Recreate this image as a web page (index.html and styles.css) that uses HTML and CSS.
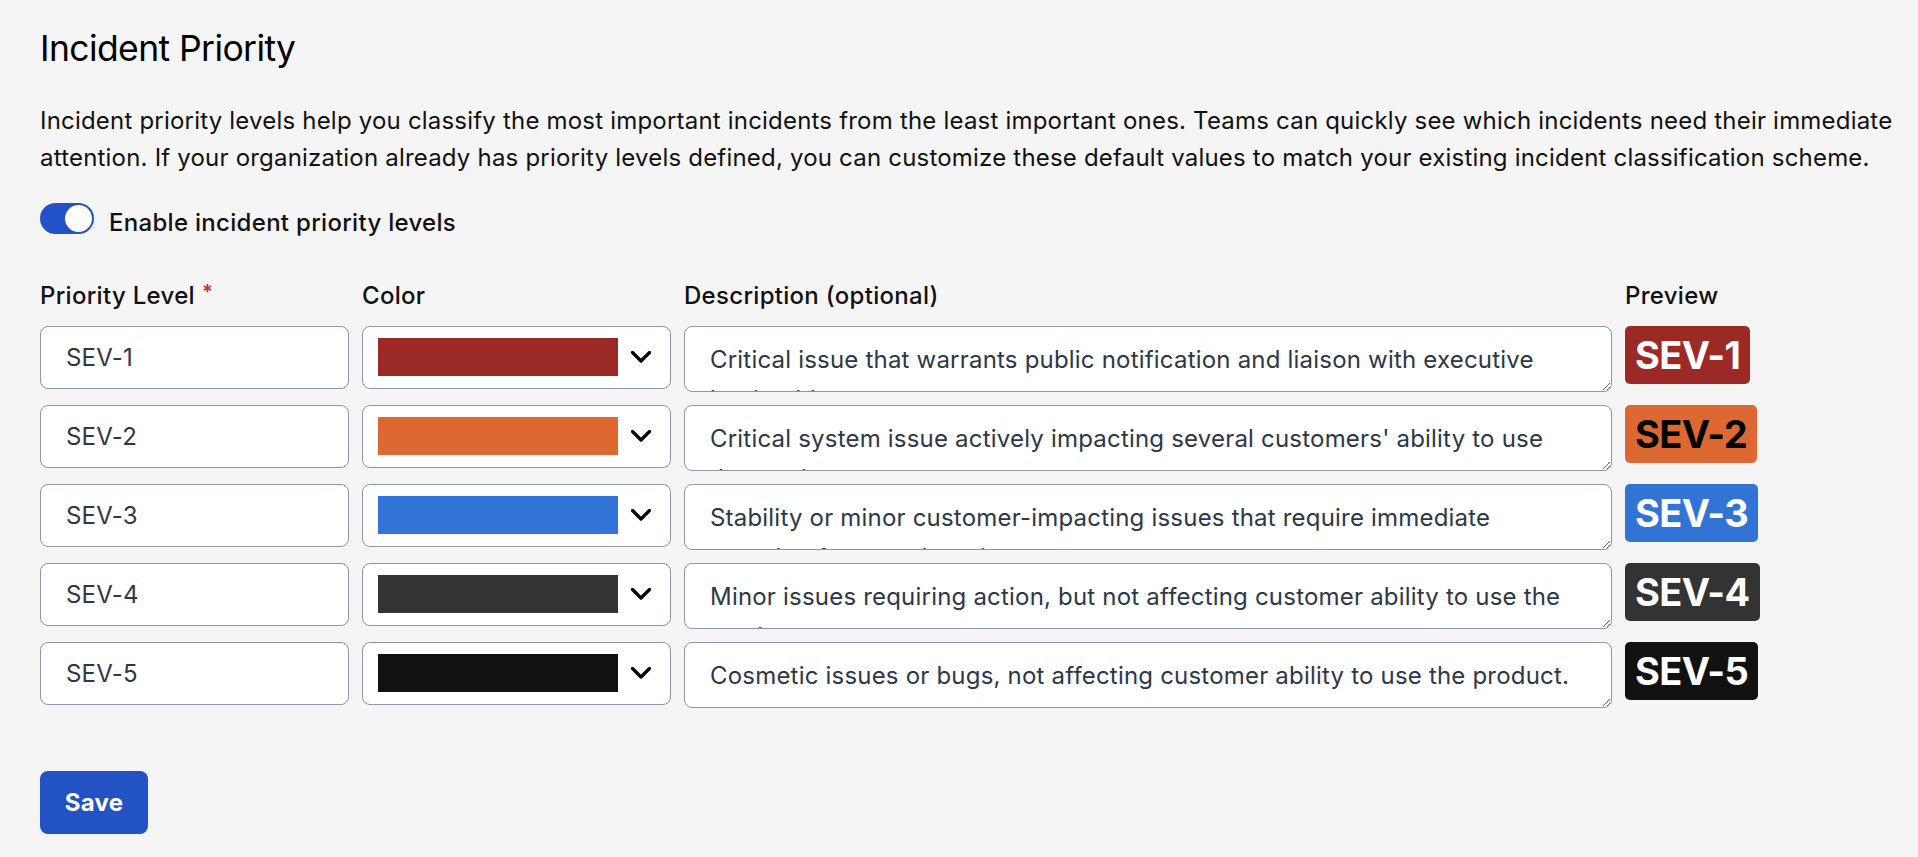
FILE: index.html
```html
<!DOCTYPE html>
<html lang="en">
<head>
<meta charset="utf-8">
<title>Incident Priority</title>
<link rel="stylesheet" href="styles.css">
</head>
<body>
<main class="page">
  <h1 class="title">Incident Priority</h1>
  <p class="intro">Incident priority levels help you classify the most important incidents from the least important ones. Teams can quickly see which incidents need their immediate attention. If your organization already has priority levels defined, you can customize these default values to match your existing incident classification scheme.</p>

  <label class="toggle-row">
    <span class="toggle"><span class="knob"></span></span>
    <span class="toggle-label">Enable incident priority levels</span>
  </label>

  <div class="levels">
    <div class="grid head">
      <div class="col-label">Priority Level<span class="req">*</span></div>
      <div class="col-label">Color</div>
      <div class="col-label">Description (optional)</div>
      <div class="col-label">Preview</div>
    </div>

    <div class="grid row">
      <input class="field" type="text" value="SEV-1">
      <div class="select"><span class="swatch c1"></span><svg class="chev" viewBox="0 0 20 12" width="20" height="12"><path d="M1.5 1.5 L10 10 L18.5 1.5" fill="none" stroke="#000" stroke-width="3.2" stroke-linecap="round" stroke-linejoin="round"/></svg></div>
      <textarea class="desc">Critical issue that warrants public notification and liaison with executive leadership.</textarea>
      <div class="badge c1 light">SEV-1</div>
    </div>

    <div class="grid row">
      <input class="field" type="text" value="SEV-2">
      <div class="select"><span class="swatch c2"></span><svg class="chev" viewBox="0 0 20 12" width="20" height="12"><path d="M1.5 1.5 L10 10 L18.5 1.5" fill="none" stroke="#000" stroke-width="3.2" stroke-linecap="round" stroke-linejoin="round"/></svg></div>
      <textarea class="desc">Critical system issue actively impacting several customers' ability to use the product.</textarea>
      <div class="badge c2 dark">SEV-2</div>
    </div>

    <div class="grid row">
      <input class="field" type="text" value="SEV-3">
      <div class="select"><span class="swatch c3"></span><svg class="chev" viewBox="0 0 20 12" width="20" height="12"><path d="M1.5 1.5 L10 10 L18.5 1.5" fill="none" stroke="#000" stroke-width="3.2" stroke-linecap="round" stroke-linejoin="round"/></svg></div>
      <textarea class="desc">Stability or minor customer-impacting issues that require immediate attention from engineering.</textarea>
      <div class="badge c3 light">SEV-3</div>
    </div>

    <div class="grid row">
      <input class="field" type="text" value="SEV-4">
      <div class="select"><span class="swatch c4"></span><svg class="chev" viewBox="0 0 20 12" width="20" height="12"><path d="M1.5 1.5 L10 10 L18.5 1.5" fill="none" stroke="#000" stroke-width="3.2" stroke-linecap="round" stroke-linejoin="round"/></svg></div>
      <textarea class="desc">Minor issues requiring action, but not affecting customer ability to use the product.</textarea>
      <div class="badge c4 light">SEV-4</div>
    </div>

    <div class="grid row">
      <input class="field" type="text" value="SEV-5">
      <div class="select"><span class="swatch c5"></span><svg class="chev" viewBox="0 0 20 12" width="20" height="12"><path d="M1.5 1.5 L10 10 L18.5 1.5" fill="none" stroke="#000" stroke-width="3.2" stroke-linecap="round" stroke-linejoin="round"/></svg></div>
      <textarea class="desc">Cosmetic issues or bugs, not affecting customer ability to use the product.</textarea>
      <div class="badge c5 light">SEV-5</div>
    </div>
  </div>

  <button class="save" type="button">Save</button>
</main>
</body>
</html>
```
FILE: styles.css
```css
html, body {
  margin: 0;
  padding: 0;
  background: #f5f5f5;
}

body {
  font-family: Inter, "Noto Sans", "Liberation Sans", sans-serif;
  color: #111;
  font-size: 24px;
  letter-spacing: 0.2px;
}

.page {
  padding: 27px 16px 0 40px;
}

.title {
  margin: 0;
  font-size: 35.5px;
  line-height: 44px;
  font-weight: 400;
  letter-spacing: -0.6px;
  color: #000;
}

.intro {
  margin: 32px 0 0;
  font-size: 24px;
  line-height: 36.7px;
  color: #111;
}

.toggle-row {
  display: flex;
  align-items: flex-start;
  gap: 15px;
  margin-top: 27px;
}

.toggle {
  display: flex;
  justify-content: flex-end;
  align-items: center;
  box-sizing: border-box;
  width: 54px;
  height: 31px;
  padding: 2px;
  border-radius: 16px;
  background: #2352c8;
}

.knob {
  width: 27px;
  height: 27px;
  border-radius: 50%;
  background: #fff;
}

.toggle-label {
  margin-top: 2px;
  line-height: 36px;
  font-weight: 500;
  letter-spacing: 0.3px;
  color: #111;
}

.levels {
  margin-top: 37px;
  display: flex;
  flex-direction: column;
  gap: 13px;
}

.grid {
  display: grid;
  grid-template-columns: 309px 309px 928px auto;
  column-gap: 13px;
  align-items: start;
}

.head {
  margin-bottom: -1.4px;
}

.col-label {
  font-weight: 500;
  line-height: 36px;
  letter-spacing: 0.3px;
  color: #111;
}

.req {
  color: #c53030;
  font-size: 20px;
  font-weight: 600;
  margin-left: 7px;
  vertical-align: top;
  line-height: 28px;
}

.row {
  height: 66px;
}

.field,
.select,
.desc {
  box-sizing: border-box;
  border: 1px solid #8e97a9;
  border-radius: 8px;
  background: #fff;
  font-family: inherit;
  font-size: 24px;
  letter-spacing: 0.2px;
  color: #2d3748;
}

.field {
  width: 100%;
  height: 63px;
  padding: 0 25px;
  margin: 0;
  outline: none;
}

.select {
  display: flex;
  align-items: center;
  height: 63px;
  padding: 0 19px 1px 15px;
}

.swatch {
  display: block;
  width: 240px;
  height: 38px;
}

.chev {
  display: block;
  margin-left: auto;
}

.desc {
  display: block;
  width: 100%;
  height: 66px;
  margin: 0;
  padding: 13px 25px;
  line-height: 40px;
  overflow: hidden;
  resize: vertical;
  outline: none;
}

.badge {
  justify-self: start;
  height: 58px;
  padding: 0 10px;
  border-radius: 5px;
  font-size: 38px;
  font-weight: 700;
  line-height: 58px;
  letter-spacing: -0.6px;
}

.light { color: #fff; }
.dark { color: #000; }

.c1 { background: #9b2926; }
.c2 { background: #dd6832; }
.c3 { background: #3174d6; }
.c4 { background: #333333; }
.c5 { background: #111111; }

.save {
  display: block;
  margin-top: 63px;
  width: 108px;
  height: 63px;
  border: 0;
  border-radius: 8px;
  background: #2352c5;
  color: #fff;
  font-family: inherit;
  font-size: 24px;
  font-weight: 700;
  letter-spacing: 0.2px;
  padding: 0;
}
```
